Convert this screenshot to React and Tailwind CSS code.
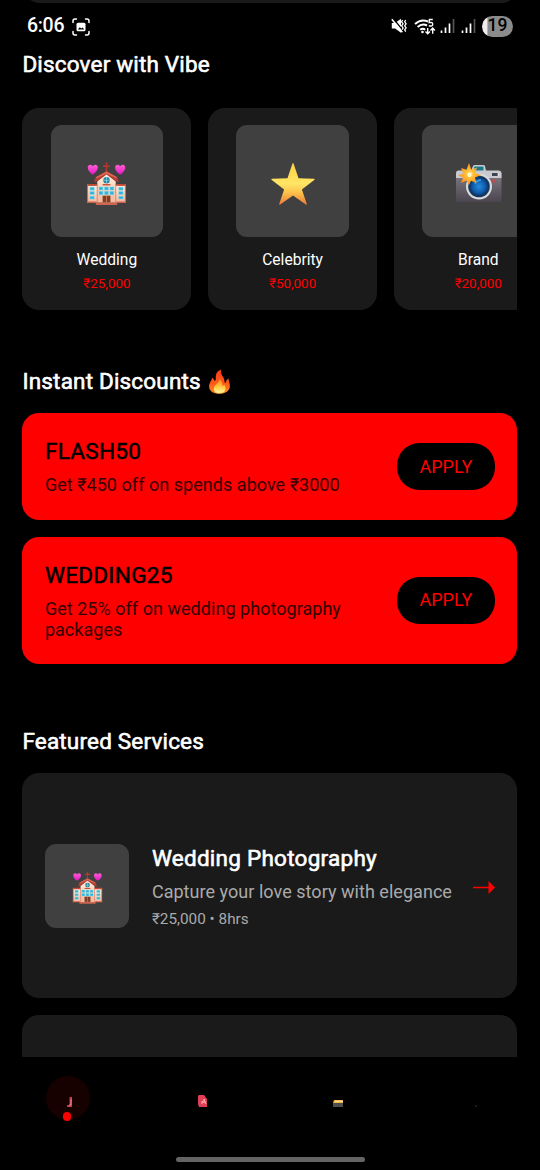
import React from "react";

function Church({ className }) {
  return (
    <svg viewBox="0 0 42 44" className={className}>
      <defs>
        <linearGradient id="heart" x1="0" y1="0" x2="0" y2="1">
          <stop offset="0" stopColor="#ff5fd2" />
          <stop offset="1" stopColor="#e315c4" />
        </linearGradient>
        <linearGradient id="wall" x1="0" y1="0" x2="0" y2="1">
          <stop offset="0" stopColor="#fff0dd" />
          <stop offset="1" stopColor="#f5b79c" />
        </linearGradient>
      </defs>
      <path d="M7 13C3 10 1.800 7.800 1.800 5.600 1.800 2.400 5.600 1.800 7 4.400 8.400 1.800 12.200 2.400 12.200 5.600 12.200 7.800 10.600 10 7 13Z" fill="url(#heart)" />
      <path d="M35 13c-4-3-5.200-5.200-5.200-7.400 0-3.200 3.800-3.800 5.200-1.200 1.400-2.600 5.200-2 5.200 1.200 0 2.200-1.200 4.400-5.200 7.400Z" fill="url(#heart)" />
      <path d="M20.200.5h1.600v3h2.800v1.500h-2.800v5h-1.600v-5h-2.800V3.500h2.800Z" fill="#b8362e" />
      <rect x="1.700" y="24" width="38.600" height="17.500" fill="url(#wall)" />
      <path d="M11.500 20 21 12l9.500 8v21.500h-19Z" fill="url(#wall)" />
      <path d="M1 22.500h10v1.800H1Zm30 0h10v1.800H31Z" fill="#c64535" />
      <path d="M8 20.500 10 15.500l11-6 11 6 2 5-3.500-.800L21 12.700l-9.500 7Z" fill="#b53d34" />
      <path d="M10 15.500 21 9.500l11 6-1 1-10-4.600-10 4.600Z" fill="#dc6354" />
      <circle cx="21" cy="18.700" r="3.300" fill="#337f9c" />
      <path d="M21 15.500v6.500M18 18.700h6" stroke="#75d9ef" strokeWidth=".8" />
      <path d="M17 22.500h8v1.500h-8Z" fill="#c65242" />
      <g fill="#2cb4dc" stroke="#8be0ef" strokeWidth=".5">
        <path d="M13.300 25.500h4v3.200h-4zM18.900 25.500h4v3.200h-4zM24.500 25.500h4v3.200h-4zM13.300 30h4v3.500h-4zM18.900 30h4v3.500h-4zM24.500 30h4v3.500h-4z" />
        <path d="M4 25.800h4.500v3H4zM4 30.300h4.500v3H4zM4 35h4.500v3H4zM33.500 25.800H38v3h-4.500zM33.500 30.300H38v3h-4.500zM33.500 35H38v3h-4.500z" />
      </g>
      <path d="M1.700 23v18M11.500 22v19M30.500 22v19M40.300 23v18" stroke="#d97360" strokeWidth=".8" />
      <rect x="17" y="34.500" width="8" height="7" fill="#7c3e27" />
      <path d="M21 34.500v7" stroke="#d98a57" strokeWidth=".8" />
      <path d="M1 40.500h9.500V42H1Zm30.500 0H41V42h-9.500ZM10 41.500h22V44H10Z" fill="#ce6551" />
    </svg>
  );
}

function Star({ className }) {
  return (
    <svg viewBox="0 0 44 42" className={className}>
      <defs>
        <linearGradient id="star" x1="0" y1="0" x2="0" y2="1">
          <stop offset="0" stopColor="#ffd23f" />
          <stop offset=".5" stopColor="#ffe566" />
          <stop offset=".72" stopColor="#fbc04a" />
          <stop offset="1" stopColor="#ee7a3a" />
        </linearGradient>
      </defs>
      <path d="M21.300.9q.7-1.600 1.400 0l4.800 14.400 15.300.5q1.700.1.400 1.200L30.900 26.500l4.800 14.200q.4 1.500-.9.700L22 32.600 9.200 41.400q-1.300.8-.9-.7l4.800-14.200L.8 17q-1.300-1.100.4-1.200l15.300-.5Z" fill="url(#star)" />
    </svg>
  );
}

function Camera({ className }) {
  return (
    <svg viewBox="0 0 47 39" className={className}>
      <defs>
        <linearGradient id="body" x1="0" y1="0" x2="0" y2="1">
          <stop offset="0" stopColor="#858088" />
          <stop offset="1" stopColor="#4a454e" />
        </linearGradient>
        <radialGradient id="lens">
          <stop offset="0" stopColor="#238be0" />
          <stop offset=".6" stopColor="#125fae" />
          <stop offset="1" stopColor="#082e62" />
        </radialGradient>
        <radialGradient id="flash">
          <stop offset="0" stopColor="#fffbd2" />
          <stop offset=".3" stopColor="#ffc33d" />
          <stop offset="1" stopColor="#ff8c16" />
        </radialGradient>
      </defs>
      <path d="M16 7 18 2q.5-1 2-1h8q1.500 0 2 1l1 5Z" fill="#c9cbd0" />
      <rect x="19" y="2.500" width="9.500" height="5" rx="1" fill="#17798b" />
      <rect x="1" y="7" width="45.500" height="31" rx="2" fill="url(#body)" />
      <path d="M3 6.500h41q2.500.5 2.500 3V14H1V9.500Q1 7 3 6.500Z" fill="#cbc9d0" />
      <rect x="36.500" y="8.500" width="6.500" height="4" rx=".7" fill="#3d4650" stroke="#fff" strokeWidth=".6" />
      <circle cx="38.500" cy="17" r="1.500" fill="none" stroke="#c9464b" />
      <circle cx="24" cy="22.500" r="13" fill="#d5dbe3" />
      <circle cx="24" cy="22.500" r="10.800" fill="#283949" />
      <circle cx="24" cy="22.500" r="10" fill="url(#lens)" />
      <path d="M20 20q2-4 6-4" fill="none" stroke="#3d9fe0" strokeWidth="1.500" />
      <path d="m14-1 2.200 6.500L22 3.500l-2 5.700 6.500 1.800-6.500 2.400 1.500 5.600-5.500-2.200L14 21l-2.500-4.500L6 19l2.100-5.500L3 11.500l5.300-2.100L6 4l5.500 1.800Z" fill="url(#flash)" />
      <circle cx="14.500" cy="11" r="2" fill="#fffbd0" />
    </svg>
  );
}

function Fire() {
  return (
    <svg viewBox="0 0 22 25" className="h-[25px] w-[23px]">
      <defs>
        <linearGradient id="fire" x1="0" y1="0" x2="0" y2="1">
          <stop offset="0" stopColor="#ff3b19" />
          <stop offset=".6" stopColor="#ff5a1a" />
          <stop offset="1" stopColor="#ff8d1c" />
        </linearGradient>
        <linearGradient id="flame" x1="0" y1="0" x2="0" y2="1">
          <stop offset="0" stopColor="#ff8414" />
          <stop offset=".5" stopColor="#ffc235" />
          <stop offset="1" stopColor="#fff8a0" />
        </linearGradient>
      </defs>
      <path d="M12.500.5C8.500 2 7 5 7.300 9.500c.1 2.500-1.500 3-2 .9C5 9.500 4.500 8.800 3.800 8.500 3.500 11.500.6 13.500.6 17.400.6 22 5 24.700 11 24.700s10.400-3 10.400-7.800c0-3-1.300-4.300-1.400-7.400-1.800.8-2.200 2-2.500 3.400-.3 1.300-1.600.8-1.500-.5.300-4.200-4.600-6.200-3.500-11.900Z" fill="url(#fire)" />
      <path d="M10.800 9.500c.6 4-4.200 5.700-5.400 9.200C4.600 22 7 24.200 11 24.200s6.600-2.200 5.900-5.700c-.3-1.200-.8-1.700-.9-3-1.200.5-1.600 1.200-2 2C13.600 14 13.400 12 10.800 9.500Z" fill="url(#flame)" />
    </svg>
  );
}

function StatusBar() {
  return (
    <div className="flex h-[44px] shrink-0 items-center justify-between pt-[2px] pr-[27px] pl-[27px]">
      <div className="flex items-center gap-[8px]">
        <span className="text-[19.500px] leading-none font-medium tracking-[-0.3px]">6:06</span>
        <svg viewBox="0 0 18 18" className="mt-[1px] size-[18px]" fill="none" stroke="#fff" strokeWidth="1.500" strokeLinecap="round">
          <path d="M1 4.500V3q0-2 2-2h1.500M13.500 1H15q2 0 2 2v1.500M17 13.500V15q0 2-2 2h-1.500M4.500 17H3q-2 0-2-2v-1.500" />
          <rect x="4.500" y="4.800" width="9" height="8.400" rx="1.500" fill="#fff" stroke="none" />
          <path d="m5.800 11.500 2-2.300 1.500 1.200 1.400-1 1.500 2.100Z" fill="#000" stroke="none" />
        </svg>
      </div>
      <div className="flex items-center">
        <svg viewBox="0 0 16 16" className="h-[16px] w-[16px]" fill="none" stroke="#fff" strokeWidth="1.400">
          <path d="M.8 5h3.300L10 .8v14L4.100 10.500H.8Z" fill="#fff" stroke="none" />
          <path d="m2 .3 10 12.200" stroke="#000" strokeWidth="1.300" />
          <path d="m.8 1.300 10.500 13" strokeWidth="1.600" />
          <path d="m11.600 2-1 1.800 1.500 2-1.500 2 1.500 2-1 2M14.700 2l-1 1.800 1.400 2-1.400 2 1.400 2-1.400 2 1 1.800" strokeWidth="1.300" />
        </svg>
        <svg viewBox="0 0 22 17" className="ml-[7px] h-[17px] w-[22px]" fill="none" stroke="#fff" strokeWidth="2">
          <path d="M1 6q6-5.500 13-2.500M3.600 9q4.500-4 9.500-1.500M6.200 11.700q2.600-2 5 0" />
          <circle cx="8.500" cy="14" r="1.300" fill="#fff" stroke="none" />
          <path d="M18.800 1.500h-3.400l-.3 3.100q3.600-.7 3.600 1.600 0 2.500-3.900 1.500" strokeWidth="1.400" />
          <path d="M13.700 10v5.500M11.500 13.400l2.200 2.300 2.200-2.300M18.700 15.800v-5.300M16.500 12.400l2.200-2.300 2.200 2.300" strokeWidth="1.400" />
        </svg>
        <Signal className="ml-[4px] h-[16px] w-[15px]" />
        <Signal className="ml-[6px] h-[16px] w-[15px]" />
        <div className="ml-[6px] flex h-[21px] w-[31px] items-center justify-center rounded-full bg-[linear-gradient(90deg,#eee_0_16%,#8b8b8b_19%)] text-[17.500px] leading-none font-medium text-black">
          19
        </div>
      </div>
    </div>
  );
}

function Signal({ className }) {
  return (
    <svg viewBox="0 0 15 16" className={className} strokeWidth="1.700" fill="none">
      <path d="M1.500 15v-2.500M5.500 15V9.500M9.500 15V5.500" stroke="#fff" />
      <path d="M13.500 15V1" stroke="#555" />
    </svg>
  );
}

const strong = "tracking-[0.180px] [-webkit-text-stroke:0.6px_currentColor]";

function Heading({ children }) {
  return (
    <h2 className={`flex h-[30px] shrink-0 items-center text-[22.500px] leading-none ${strong}`}>{children}</h2>
  );
}

function CategoryCard({ name, price, children }) {
  return (
    <div className="flex h-[202px] w-[169px] shrink-0 flex-col items-center rounded-[17px] bg-[#1a1a1a] pt-[17px]">
      <div className="flex size-[112.500px] items-center justify-center rounded-[11px] bg-[#404040] pt-[5.500px]">{children}</div>
      <div className="mt-[13px] text-[15.600px] leading-[20px]">{name}</div>
      <div className="mt-[6px] text-[13.400px] leading-[16px] text-[#f00]">{price}</div>
    </div>
  );
}

function Discount({ code, className, children }) {
  return (
    <div className={`flex items-center justify-between rounded-[17px] bg-[#f00] px-[22.500px] text-black ${className}`}>
      <div className="w-[310px]">
        <div className="text-[22.500px] leading-[26px] tracking-[0.300px] [-webkit-text-stroke:0.5px_currentColor]">{code}</div>
        <div className="mt-[10px] -mb-[0.500px] text-[18px] leading-[21px] tracking-[0.040px] text-[#330000]">{children}</div>
      </div>
      <button className="h-[47px] w-[98px] rounded-[22.500px] bg-black text-[18px] leading-none text-[#f00]">APPLY</button>
    </div>
  );
}

function BottomNav() {
  return (
    <nav className="flex h-[113px] shrink-0 flex-col bg-black">
      <div className="grid h-[90px] grid-cols-4">
        <div className="flex justify-center pt-[19px]">
          <div className="relative flex size-[44px] items-center justify-center rounded-full bg-[#170000]">
            <svg viewBox="0 0 6 10" className="mt-[8px] ml-[5px] h-[10px] w-[6px]">
              <path d="M2.500 0H5v10H0V8h2.500Z" fill="#c63946" />
              <path d="M4 2v6H2" fill="none" stroke="#ee9c9b" strokeWidth=".8" />
            </svg>
            <i className="absolute top-[36px] left-[17px] size-[8.500px] rounded-full bg-[#f00]" />
          </div>
        </div>
        <div className="flex items-start justify-center pt-[38px]">
          <svg viewBox="0 0 9 12" className="h-[12px] w-[9px]">
            <path d="M1 0h5l3 4v8H1L0 9V1Z" fill="#df4057" />
            <path d="M4 9V6l2 2V4l2 5" fill="none" stroke="#ffb6bc" />
          </svg>
        </div>
        <div className="flex items-start justify-center pt-[43px]">
          <svg viewBox="0 0 10 7" className="h-[7px] w-[10px]">
            <path d="M0 3h10v4H0Z" fill="#4e4e4b" />
            <path d="M1 0h9v3H0Z" fill="#ecb24a" />
            <path d="M2 1.300h8" stroke="#ffe79b" />
          </svg>
        </div>
        <div className="flex items-start justify-center pt-[48px]">
          <i className="ml-[6px] size-[2px] rounded-full bg-[#252525]" />
        </div>
      </div>
      <div className="mx-auto mt-[10px] h-[5px] w-[189px] rounded-full bg-[#646464]" />
    </nav>
  );
}

export default function App() {
  return (
    <div className="flex h-[1170px] w-[540px] flex-col overflow-hidden bg-black font-[Roboto,sans-serif] text-white">
      <div className="mx-[22.500px] h-[3px] shrink-0 overflow-hidden">
        <div className="-mt-[37px] h-[40px] rounded-[17px] bg-[#1a1a1a]" />
      </div>
      <StatusBar />
      <main className="flex h-[1010px] shrink-0 flex-col overflow-hidden pt-[2px] pr-[22.600px] pl-[22.400px]">
        <Heading>Discover with Vibe</Heading>
        <div className="mt-[28.500px] flex shrink-0 gap-[16.700px] overflow-hidden">
          <CategoryCard name="Wedding" price="₹25,000">
            <Church className="h-[43px] w-[41px]" />
          </CategoryCard>
          <CategoryCard name="Celebrity" price="₹50,000">
            <Star className="h-[42px] w-[44px]" />
          </CategoryCard>
          <CategoryCard name="Brand" price="₹20,000">
            <Camera className="h-[39px] w-[47px] overflow-visible" />
          </CategoryCard>
        </div>
        <div className="mt-[57px] shrink-0">
          <Heading>
            <span className="mr-[7px]">Instant Discounts</span>
            <Fire />
          </Heading>
        </div>
        <div className="mt-[16.800px] flex shrink-0 flex-col gap-[16.800px]">
          <Discount code="FLASH50" className="h-[106.500px]">Get ₹450 off on spends above ₹3000</Discount>
          <Discount code="WEDDING25" className="h-[127.500px]">Get 25% off on wedding photography packages</Discount>
        </div>
        <div className="mt-[61.700px] shrink-0">
          <Heading>Featured Services</Heading>
        </div>
        <div className="mt-[17.500px] flex shrink-0 flex-col gap-[17px]">
          <div className="flex h-[225px] shrink-0 items-center rounded-[17px] bg-[#1a1a1a] px-[22.500px]">
            <div className="flex size-[84.500px] items-center justify-center rounded-[11px] bg-[#404040] pt-[4px]">
              <Church className="h-[33px] w-[31px]" />
            </div>
            <div className="ml-[22.500px] grow whitespace-nowrap">
              <div className="text-[22.500px] leading-[26px] tracking-[0.260px] [-webkit-text-stroke:0.6px_currentColor]">Wedding Photography</div>
              <div className="mt-[10px] text-[18px] leading-[21px] tracking-[0.040px] text-[#aaa]">Capture your love story with elegance</div>
              <div className="mt-[8px] -mb-[1px] text-[15.300px] leading-[18px] text-[#aaa]">₹25,000 • 8hrs</div>
            </div>
            <svg viewBox="0 0 22 13" className="mt-[4px] h-[13px] w-[22px]">
              <path d="M0 6.500h17" stroke="#f00" strokeWidth="1.500" />
              <path d="M15.500 0 22 6.500 15.500 13Z" fill="#f00" />
            </svg>
          </div>
          <div className="h-[100px] shrink-0 rounded-t-[17px] bg-[#1a1a1a]" />
        </div>
      </main>
      <BottomNav />
    </div>
  );
}
